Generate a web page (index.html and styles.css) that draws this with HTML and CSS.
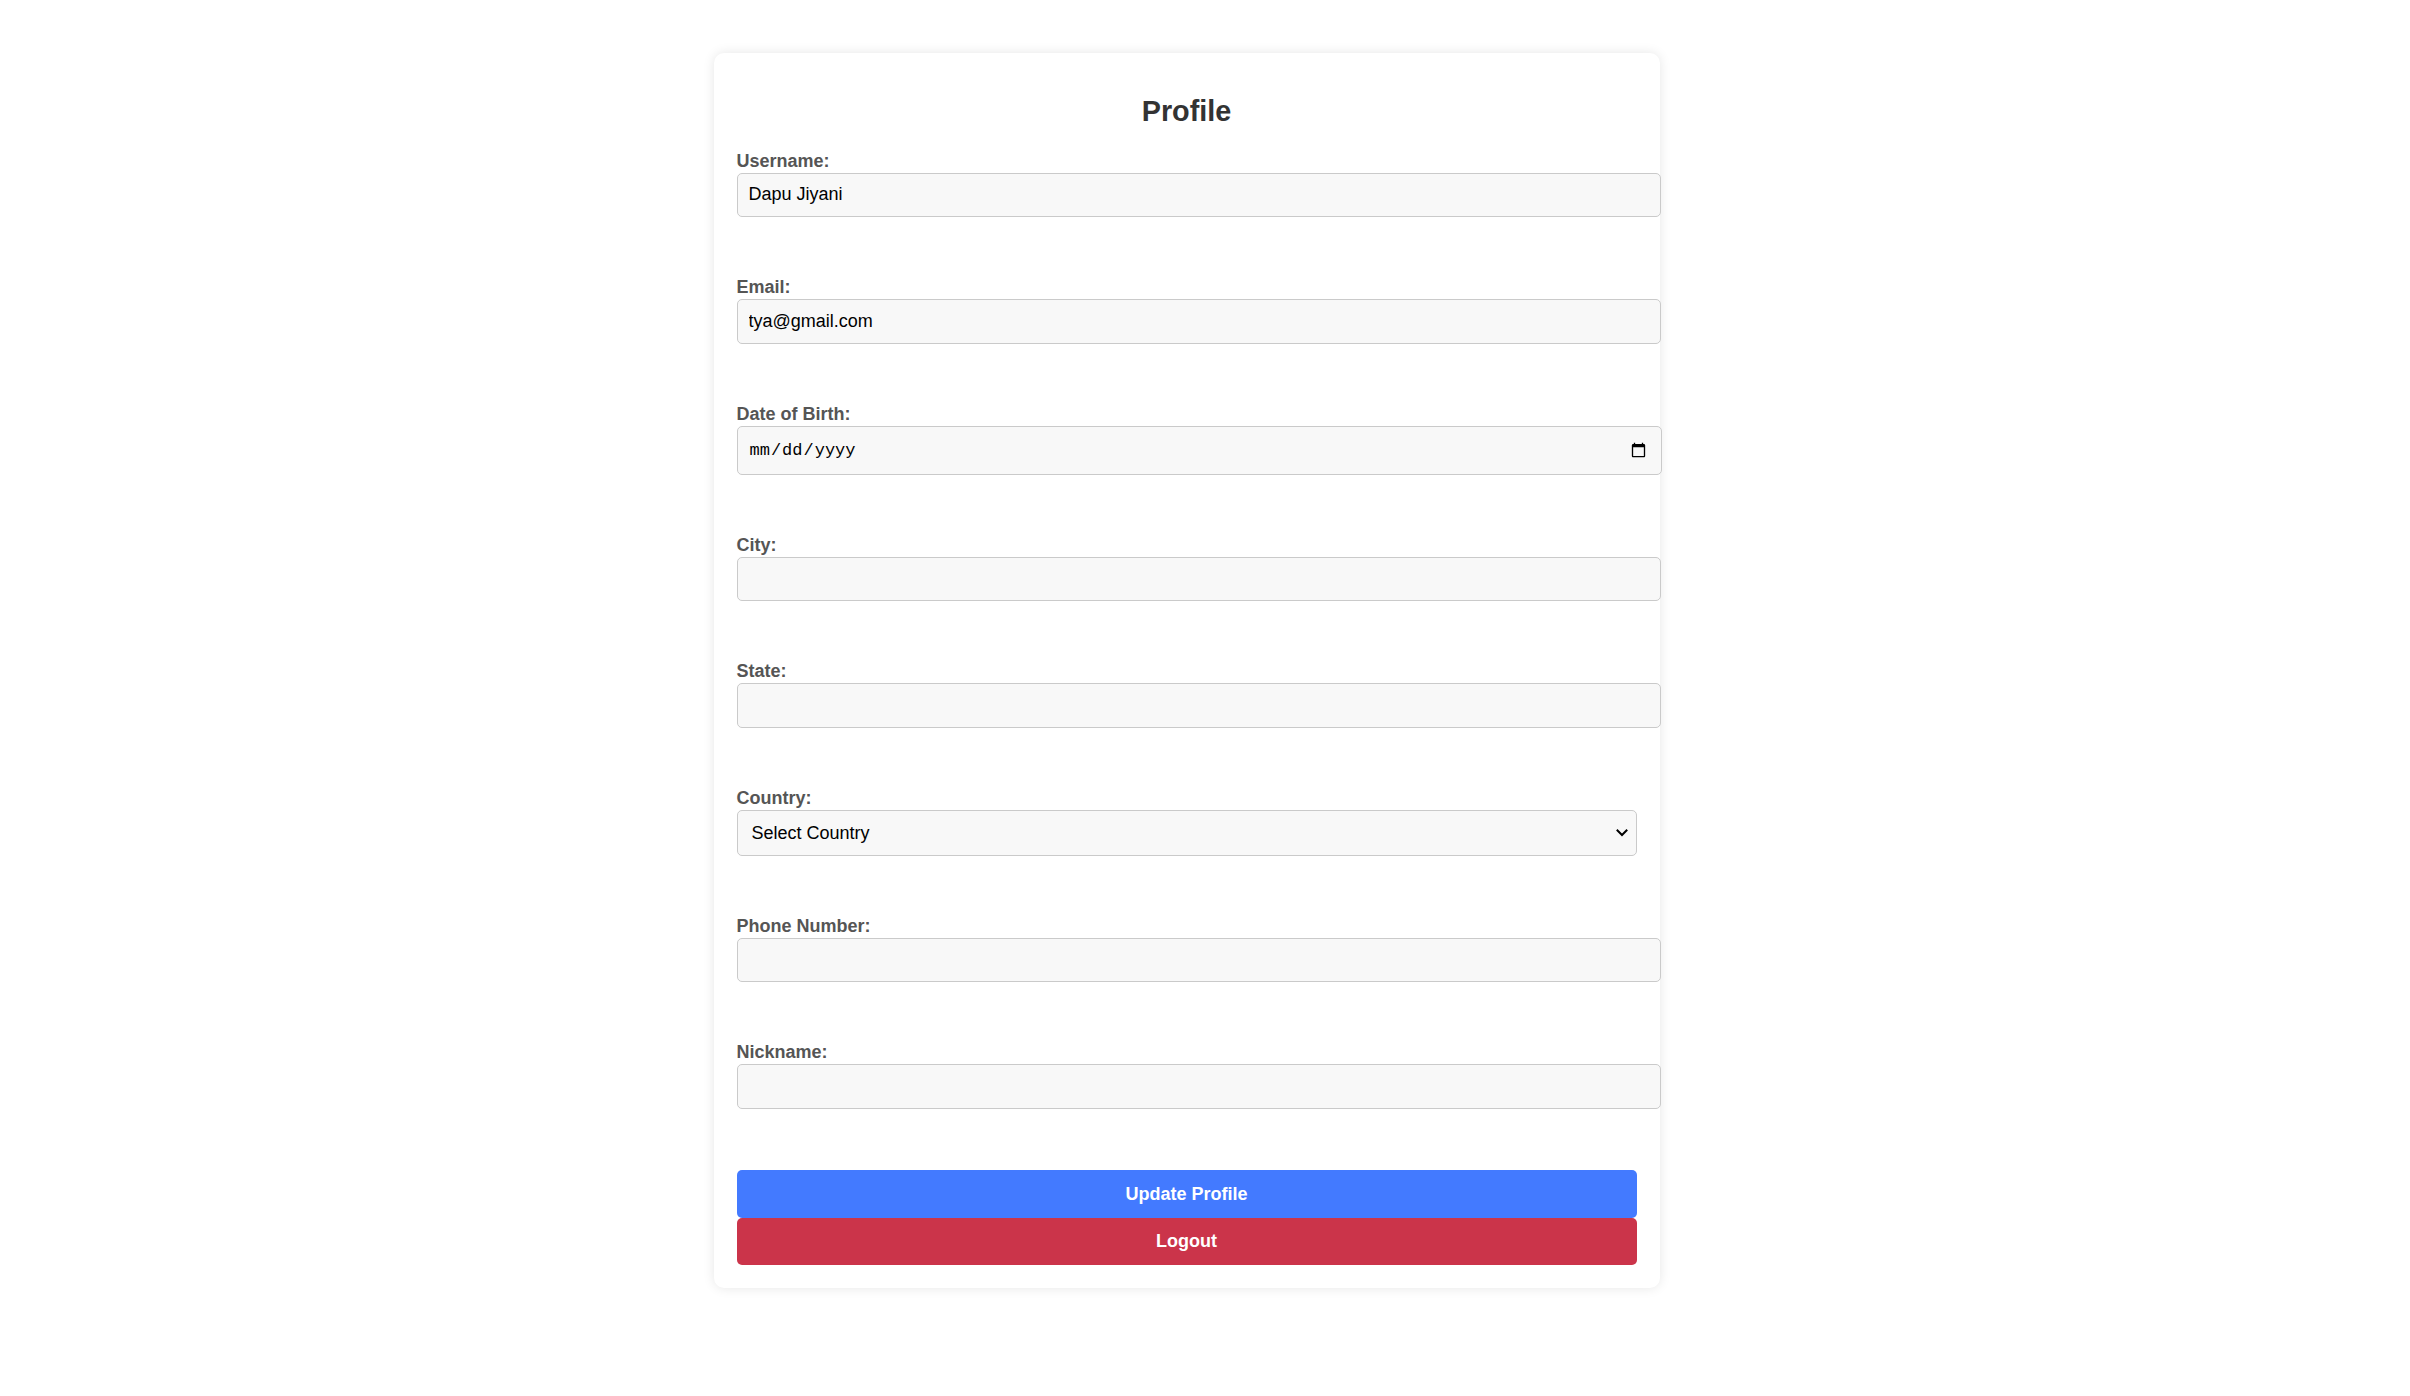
FILE: index.html
```html
<!DOCTYPE html>
<html lang="en">
<head>
<meta charset="utf-8">
<title>Profile</title>
<link rel="stylesheet" href="styles.css">
</head>
<body>
<main class="page">
  <form class="card">
    <h2 class="title">Profile</h2>
    <div class="field">
      <label class="label" for="username">Username:</label>
      <input class="input" id="username" type="text" value="Dapu Jiyani">
    </div>
    <div class="field">
      <label class="label" for="email">Email:</label>
      <input class="input" id="email" type="email" value="tya@gmail.com">
    </div>
    <div class="field">
      <label class="label" for="dob">Date of Birth:</label>
      <input class="input input-date" id="dob" type="date">
    </div>
    <div class="field">
      <label class="label" for="city">City:</label>
      <input class="input" id="city" type="text">
    </div>
    <div class="field">
      <label class="label" for="state">State:</label>
      <input class="input" id="state" type="text">
    </div>
    <div class="field">
      <label class="label" for="country">Country:</label>
      <div class="select-wrap">
        <select class="select" id="country">
          <option>Select Country</option>
        </select>
        <svg class="chevron" width="12" height="8" viewBox="0 0 12 8" aria-hidden="true">
          <path d="M1.5 1.5 L6 6 L10.5 1.5" fill="none" stroke="#000" stroke-width="2" stroke-linecap="square"/>
        </svg>
      </div>
    </div>
    <div class="field">
      <label class="label" for="phone">Phone Number:</label>
      <input class="input" id="phone" type="tel">
    </div>
    <div class="field">
      <label class="label" for="nick">Nickname:</label>
      <input class="input" id="nick" type="text">
    </div>
    <div class="actions">
      <button class="btn btn-primary" type="button">Update Profile</button>
      <button class="btn btn-danger" type="button">Logout</button>
    </div>
  </form>
</main>
</body>
</html>
```
FILE: styles.css
```css
html, body {
  margin: 0;
  padding: 0;
  background: #ffffff;
}

body {
  font-family: "Liberation Sans", Arial, sans-serif;
  font-size: 18px;
  color: #333;
}

.page {
  display: flex;
  justify-content: center;
  padding: 53px 37px 60px 0;
}

.card {
  width: 900px;
  padding: 23px;
  background: #fff;
  border-radius: 10px;
  box-shadow: 0 0 12px rgba(0, 0, 0, 0.1);
  display: flex;
  flex-direction: column;
}

.title {
  margin: 19px 0 22.5px;
  text-align: center;
  font-size: 28.8px;
  font-weight: bold;
  line-height: 33px;
  color: #333;
}

.field {
  display: flex;
  flex-direction: column;
  align-items: flex-start;
  margin-bottom: 60px;
}

.field:nth-last-child(2) {
  margin-bottom: 61px;
}

.label {
  display: block;
  font-weight: bold;
  font-size: 18px;
  line-height: 21px;
  color: #555;
  margin-bottom: 1px;
}

.input {
  width: 100%;
  box-sizing: content-box;
  padding: 11px;
  font-family: "Liberation Sans", Arial, sans-serif;
  font-size: 18px;
  line-height: 20.6px;
  height: 20.6px;
  color: #000;
  background: #f8f8f8;
  border: 1px solid #cacaca;
  border-radius: 5px;
  margin: 0;
  outline: none;
}

.input-date {
  font-family: "Liberation Mono", "DejaVu Sans Mono", monospace;
  font-size: 17px;
  height: 25px;
  line-height: 25px;
  padding: 11px 12px 11px 11px;
}

.select-wrap {
  position: relative;
  width: 100%;
}

.select {
  display: block;
  width: 100%;
  box-sizing: border-box;
  height: 46px;
  padding: 0 40px 0 14px;
  font-family: "Liberation Sans", Arial, sans-serif;
  font-size: 18px;
  color: #000;
  background: #f8f8f8;
  border: 1px solid #cacaca;
  border-radius: 5px;
  margin: 0;
  outline: none;
  appearance: none;
  -webkit-appearance: none;
}

.chevron {
  position: absolute;
  right: 9px;
  top: 19px;
  pointer-events: none;
}

.actions {
  display: flex;
  flex-direction: column;
}

.btn {
  display: block;
  width: 100%;
  height: 47px;
  border: none;
  border-radius: 5px;
  font-family: "Liberation Sans", Arial, sans-serif;
  font-size: 18px;
  font-weight: bold;
  color: #fff;
  cursor: pointer;
  margin: 0;
}

.btn-primary {
  background: #437aff;
  height: 48px;
}

.btn-danger {
  background: #cb344a;
}
```
